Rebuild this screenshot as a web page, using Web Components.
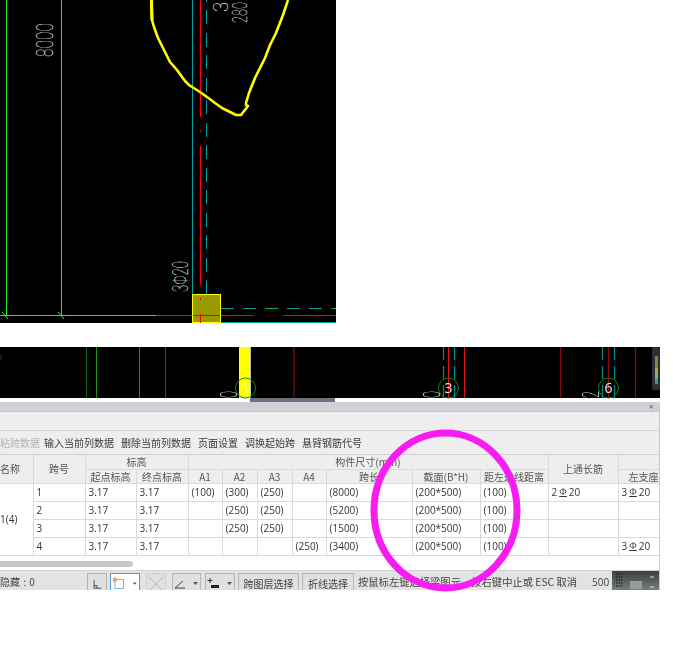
<!DOCTYPE html>
<html lang="zh">
<head>
<meta charset="utf-8">
<title>梁平法表格</title>
<style>
html, body { margin: 0; background: #fff; }
body { font: 10px "Open Sans", "Noto Sans CJK SC", sans-serif; color: #333; }
</style>
</head>
<body>
<cad-page>
  <cad-plan></cad-plan>
  <cad-strip></cad-strip>
  <beam-panel>
    <beam-toolbar></beam-toolbar>
    <beam-table></beam-table>
    <status-bar></status-bar>
  </beam-panel>
  <ink-ring></ink-ring>
</cad-page>

<script>
// page wrapper
class CadPage extends HTMLElement {
    constructor() {
        super();
        let shadow = this.attachShadow({mode: 'open'});
        shadow.innerHTML = `
            <style>
            :host { display: flex; flex-direction: column; position: relative; width: 673px; height: 666px; overflow: hidden; }
            </style>
            <slot></slot>
        `;
    }
}

// top drawing, coordinates are the drawing itself
class CadPlan extends HTMLElement {
    constructor() {
        super();
        let shadow = this.attachShadow({mode: 'open'});
        shadow.innerHTML = `
            <style>
            :host { display: block; width: 336px; height: 323px; flex: none; }
            svg { display: block; background: #000; }
            text { font-family: Roboto, "Liberation Sans", sans-serif; font-weight: 100; fill: #fff; }
            </style>
            <svg width="336" height="323" viewBox="0 0 336 323" shape-rendering="crispEdges">
              <g stroke="#22ee22" stroke-width="1" fill="none">
                <path d="M6.5 0V316M61.5 0V316M0 315.5H156"/>
                <path d="M2 312L8 319M58 312L64 319" shape-rendering="auto"/>
              </g>
              <g stroke="#00a0a0" fill="none">
                <path d="M192.5 0V323M221 322.5H336"/>
                <path d="M206.5 10V294" stroke-dasharray="14 8.5"/>
                <path d="M206.5 0V2"/>
                <path d="M221 308.5H336" stroke-dasharray="13 9"/>
              </g>
              <g stroke="#f00" fill="none">
                <path d="M200.5 0V117M200.5 130V132M200.5 146V285"/>
                <path d="M156 315.5H254M268 315.5H269M283 315.5H336"/>
              </g>
              <rect x="192.5" y="294.5" width="28" height="28" fill="#9a9a00" stroke="#ffff00"/>
              <path d="M193 315.5H220M200.5 314V323M200.5 298V300" stroke="#f00"/>
              <path d="M151.5 0L152 20L154 27L158 38L163 48L170 62L177 70L185 81L189 85L200 92L207 97L215 103L222 108L230 112L236 115L241 115L248 106L246 105L246 103L249 93L255 78L265 58L270 45L276 33L283 15L288 0" fill="none" stroke="#ffff00" stroke-width="2.6" stroke-linejoin="round" shape-rendering="auto"/>
              <path d="M151.5 0L152 20" fill="none" stroke="#ffff00" stroke-width="3" shape-rendering="auto"/>
              <text transform="translate(53 57) rotate(-90)" font-size="24" textLength="34" lengthAdjust="spacingAndGlyphs">8000</text>
              <text transform="translate(188 292) rotate(-90)" font-size="22" textLength="31" lengthAdjust="spacingAndGlyphs">3Φ20</text>
              <text transform="translate(247 23) rotate(-90)" font-size="20" textLength="21" lengthAdjust="spacingAndGlyphs">280</text>
              <text transform="translate(228 12) rotate(-90)" font-size="20" textLength="10" lengthAdjust="spacingAndGlyphs">3</text>
            </svg>
        `;
    }
}

// lower strip of the drawing with axis bubbles
class CadStrip extends HTMLElement {
    constructor() {
        super();
        let shadow = this.attachShadow({mode: 'open'});
        let bubble = (x, label, col) => `
            <circle cx="${x}" cy="41" r="10" fill="none" stroke="#0a8a0a"/>
            <text x="${x}" y="46" text-anchor="middle" font-size="14" fill="${col}">${label}</text>`;
        shadow.innerHTML = `
            <style>
            :host { display: block; width: 660px; height: 55px; margin-top: 24px; flex: none; }
            svg { display: block; filter: blur(.35px); }
            text { font-family: "Open Sans", sans-serif; }
            .dim { font-family: Roboto, sans-serif; font-weight: 100; fill: #fff; }
            </style>
            <svg width="660" height="55" viewBox="0 0 660 55">
              <rect width="660" height="51" fill="#000"/>
              <g stroke-width="1">
                <path d="M86.5 0V51M165.5 0V51" stroke="#0a6a0a"/>
                <path d="M96.5 0V51M139.5 0V51" stroke="#139a13"/>
                <path d="M294 0V51M560.5 0V51M608.5 0V51M635.5 0V51" stroke="#8a0a0a" stroke-width="1.2"/>
                <path d="M448.5 0V51M464.5 0V51" stroke="#e01010"/>
                <path d="M443.5 0V51M454.5 0V51M602.5 0V51M614.5 0V51" stroke="#008c8c" stroke-width="1.2" stroke-dasharray="13 6"/>
              </g>
              <rect x="239" width="11" height="51" fill="#ffff00"/>
              <path d="M250.5 0V51" stroke="#b8c4c8"/>
              <path d="M0 8L2 10L0 13" stroke="#8a0a0a" fill="none"/>
              ${bubble(245.5, '1', '#ffffa0')}
              ${bubble(448.5, '3', '#eeeeee')}
              ${bubble(608.5, '6', '#eeeeee')}
              <text class="dim" transform="translate(237 51) rotate(-90)" font-size="24" textLength="7" lengthAdjust="spacingAndGlyphs">0</text>
              <text class="dim" transform="translate(440 51) rotate(-90)" font-size="24" textLength="7" lengthAdjust="spacingAndGlyphs">0</text>
              <text class="dim" transform="translate(599 51) rotate(-90)" font-size="24" textLength="7" lengthAdjust="spacingAndGlyphs">2</text>
              <rect x="250" y="51" width="85" height="4" fill="#6b7280"/>
              <rect x="652" width="8" height="43" rx="2" fill="#2a3038"/>
              <rect x="655" y="9" width="3" height="12" fill="#8a8040"/>
              <rect x="655" y="21" width="3" height="11" fill="#9aa860"/>
              <rect x="655" y="32" width="3" height="5" fill="#3a9a90"/>
            </svg>
        `;
    }
}

// dock panel: title bar, blank row, then content
class BeamPanel extends HTMLElement {
    constructor() {
        super();
        let shadow = this.attachShadow({mode: 'open'});
        shadow.innerHTML = `
            <style>
            :host { display: flex; flex-direction: column; width: 660px; height: 188px; flex: none; background: #fff; box-sizing: border-box; border-right: 1px solid #c9cad0; }
            .title { height: 9px; background: #d0d1d6; display: flex; justify-content: flex-end; align-items: center; padding-right: 5px; flex: none; border-bottom: 1px solid #c4c5ca; color: #666; font-size: 9px; line-height: 9px; }
            .blank { height: 18px; background: #eee; border-bottom: 1px solid #d6d6d6; flex: none; }
            </style>
            <div class="title">×</div>
            <div class="blank"></div>
            <slot></slot>
        `;
    }
}

class BeamToolbar extends HTMLElement {
    constructor() {
        super();
        let shadow = this.attachShadow({mode: 'open'});
        let items = ['输入当前列数据', '删除当前列数据', '页面设置', '调换起始跨', '悬臂钢筋代号'];
        shadow.innerHTML = `
            <style>
            :host { display: flex; align-items: center; gap: 7px; height: 23px; background: #eee; border-bottom: 1px solid #d0d0d0; flex: none; overflow: hidden; font: 10px "Noto Sans CJK SC", sans-serif; color: #3a3a3a; white-space: nowrap; filter: blur(.25px); }
            .off { color: #b4b4b4; margin-right: -3px; }
            </style>
            <span class="off">粘跨数据</span>
            ${items.map(t => `<span>${t}</span>`).join('')}
        `;
    }
}

// data table
class BeamTable extends HTMLElement {
    constructor() {
        super();
        let shadow = this.attachShadow({mode: 'open'});
        let widths = [33, 52, 51, 52, 34, 35, 35, 34, 86, 68, 68, 70, 42];
        let bar = (n) => `${n}<span class="bar">Φ</span>20`;
        let rows = [
            ['1', '3.17', '3.17', '(100)', '(300)', '(250)', '', '(8000)', '(200*500)', '(100)', bar(2), bar(3)],
            ['2', '3.17', '3.17', '', '(250)', '(250)', '', '(5200)', '(200*500)', '(100)', '', ''],
            ['3', '3.17', '3.17', '', '(250)', '(250)', '', '(1500)', '(200*500)', '(100)', '', ''],
            ['4', '3.17', '3.17', '', '', '', '(250)', '(3400)', '(200*500)', '(100)', '', bar(3)]
        ];
        let body = rows.map((r, i) => `<tr>${i == 0 ? '<td rowspan="4" class="name">1(4)</td>' : ''}${r.map(c => `<td>${c}</td>`).join('')}</tr>`).join('');
        shadow.innerHTML = `
            <style>
            :host { display: block; height: 115px; flex: none; overflow: hidden; font: 10px "Open Sans", "Noto Sans CJK SC", sans-serif; color: #333; filter: blur(.25px); }
            table { border-collapse: collapse; table-layout: fixed; width: 660px; }
            th, td { border: 1px solid #dadada; white-space: nowrap; overflow: hidden; box-sizing: border-box; }
            th { background: #eee; font-weight: 400; color: #555; height: 14px; line-height: 13px; text-align: center; padding: 0; font-family: "Noto Sans CJK SC", sans-serif; }
            td { height: 18px; line-height: 16px; background: #fff; padding: 0 0 0 3px; }
            th.side { text-align: left; padding-left: 0; }
            th.cut { text-align: left; padding-left: 10px; }
            td.name { text-align: left; padding-left: 0; border-left: 0; }
            th:first-child { border-left: 0; }
            tr:first-child th { border-top: 0; }
            .bar { font-size: 9.5px; position: relative; top: -1px; margin: 0 2px; text-decoration: underline; }
            .scroll { height: 6px; width: 133px; border-radius: 0 3px 3px 0; background: #c8c8c8; margin-top: 5px; }
            </style>
            <table>
              <colgroup>${widths.map(w => `<col style="width:${w}px">`).join('')}</colgroup>
              <thead>
                <tr>
                  <th rowspan="2" class="side">名称</th>
                  <th rowspan="2">跨号</th>
                  <th colspan="2">标高</th>
                  <th colspan="7">构件尺寸(mm)</th>
                  <th rowspan="2">上通长筋</th>
                  <th></th>
                </tr>
                <tr>
                  <th>起点标高</th><th>终点标高</th>
                  <th>A1</th><th>A2</th><th>A3</th><th>A4</th>
                  <th>跨长</th><th>截面(B*H)</th><th>距左边线距离</th>
                  <th class="cut">左支座</th>
                </tr>
              </thead>
              <tbody>${body}</tbody>
            </table>
            <div class="scroll"></div>
        `;
    }
}

class ToolButton extends HTMLElement {
    constructor() {
        super();
        let shadow = this.attachShadow({mode: 'open'});
        shadow.innerHTML = `
            <style>
            :host { display: inline-flex; align-items: center; justify-content: center; box-sizing: border-box; height: 20px; padding: 0 4px; border: 1px solid #b4b4b4; border-bottom: 0; background: #e0e0e0; flex: none; font: 10px "Noto Sans CJK SC", sans-serif; color: #444; white-space: nowrap; }
            :host([active]) { background: #fff; border-color: #4a9ee0; }
            :host([off]) { border-color: #cfcfcf; }
            </style>
            <slot></slot>
        `;
    }
}
customElements.define('tool-button', ToolButton);

class StatusBar extends HTMLElement {
    constructor() {
        super();
        let shadow = this.attachShadow({mode: 'open'});
        let caret = '<svg width="7" height="4" viewBox="0 0 7 4" style="margin-left:6px"><path d="M1 0H6L3.5 3Z" fill="#555"/></svg>';
        shadow.innerHTML = `
            <style>
            :host { display: flex; align-items: flex-start; height: 20px; background: #e3e3e3; border-top: 1px solid #d4d4d4; box-sizing: border-box; flex: none; overflow: hidden; font: 10px "Noto Sans CJK SC", "Open Sans", sans-serif; color: #444; white-space: nowrap; padding-top: 2px; filter: blur(.25px); }
            .count { width: 87px; flex: none; line-height: 18px; word-spacing: 1px; }
            .tools { display: flex; gap: 3px; flex: none; }
            .hint { margin-left: 4px; line-height: 18px; width: 232px; flex: none; font-size: 10.3px; overflow: hidden; }
            .scale { line-height: 18px; margin-left: 2px; font-family: "Open Sans", sans-serif; width: 20px; flex: none; }
            .grip { width: 47px; height: 20px; flex: none; margin-top: -2px; background: linear-gradient(#3a3f3f, #7a807e); }
            .grip svg { display: block; }
            </style>
            <span class="count">隐藏 : 0</span>
            <div class="tools">
              <tool-button style="width:20px"><svg width="12" height="14" viewBox="0 0 12 14"><path d="M2.5 2V12H11M2.5 9H6V12" fill="none" stroke="#333"/></svg></tool-button>
              <tool-button active style="width:30px;margin-right:3px;padding:0 2px"><svg width="16" height="15" viewBox="0 0 16 15"><rect x="2.5" y="2.5" width="11" height="11.5" fill="#fff" stroke="#4a9ee0"/><rect x="0" y="0" width="5" height="5" fill="#f0a060"/></svg>${caret}</tool-button>
              <tool-button off style="width:20px;margin-right:3px;padding:0"><svg width="18" height="18" viewBox="0 0 18 18"><path d="M2 2L16 16M16 2L2 16" stroke="#bbb"/></svg></tool-button>
              <tool-button style="width:29px;margin-right:1px;padding:0"><svg width="12" height="10" viewBox="0 0 12 10"><path d="M1 9H11M1 9L9 2" fill="none" stroke="#444"/></svg>${caret}</tool-button>
              <tool-button style="width:30px;padding:0"><svg width="13" height="12" viewBox="0 0 13 12"><path d="M3 0V5M0.5 2.5H5.5" stroke="#333"/><rect x="4" y="7" width="8" height="3" fill="#222"/></svg>${caret}</tool-button>
              <tool-button style="width:61px">跨图层选择</tool-button>
              <tool-button style="width:52px">折线选择</tool-button>
            </div>
            <span class="hint">按鼠标左键选择梁图元，按右键中止或 ESC 取消</span>
            <span class="scale">500</span>
            <div class="grip">
              <svg width="47" height="20" viewBox="0 0 47 20"><path d="M4 3H11M4 6H11M4 9H11M4 12H11M4 15H11" stroke="#111" stroke-dasharray="1.5 1"/><rect x="18" y="10" width="12" height="8" fill="#999"/><path d="M38 6H42M38 16H42" stroke="#ddd"/></svg>
            </div>
        `;
    }
}

// hand drawn magenta ring lying over the table
class InkRing extends HTMLElement {
    constructor() {
        super();
        let shadow = this.attachShadow({mode: 'open'});
        shadow.innerHTML = `
            <style>
            :host { display: block; position: absolute; left: 365px; top: 424px; width: 162px; height: 174px; pointer-events: none; }
            svg { display: block; }
            </style>
            <svg width="162" height="174" viewBox="0 0 162 174">
              <ellipse cx="80.5" cy="86.5" rx="71.5" ry="77.5" fill="none" stroke="#f71df0" stroke-width="7"/>
            </svg>
        `;
    }
}

customElements.define('cad-page', CadPage);
customElements.define('cad-plan', CadPlan);
customElements.define('cad-strip', CadStrip);
customElements.define('beam-panel', BeamPanel);
customElements.define('beam-toolbar', BeamToolbar);
customElements.define('beam-table', BeamTable);
customElements.define('status-bar', StatusBar);
customElements.define('ink-ring', InkRing);
</script>
</body>
</html>
